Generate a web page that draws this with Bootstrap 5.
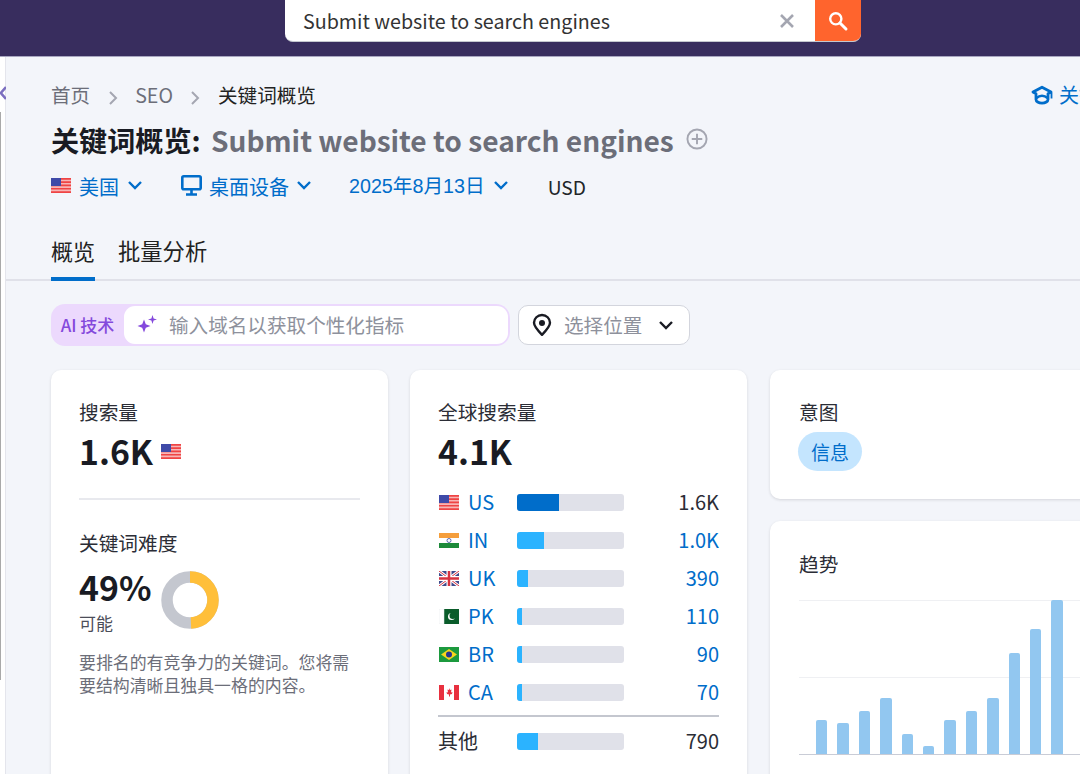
<!DOCTYPE html>
<html lang="zh">
<head>
<meta charset="utf-8">
<link rel="stylesheet" href="https://cdn.jsdelivr.net/npm/bootstrap@5.3.0/dist/css/bootstrap.min.css">
<style>
html,body{width:1080px;height:774px;overflow:hidden;margin:0}
body{background:#f3f5fa;font-family:"Noto Sans CJK SC","Noto Sans",sans-serif;color:#191b23;font-size:18px}
.topbar{height:57px;background:#382d5e;border-bottom:1px solid #a8a6c0;padding-left:285px}
.searchbox{width:576px;height:42px;background:#fff;border-radius:0 0 8px 8px;overflow:hidden;border-bottom:1px solid #c4c7cf}
.searchtext{padding-left:18px;font-size:19.7px;color:#333;line-height:42px;flex:1}
.searchclear{width:20px;margin-right:18px}
.searchbtn{width:46px;height:42px;background:#ff642d}
.stage{height:717px;overflow:hidden}
.siderail{width:6px;flex:none;background:#fff;border-right:1px solid #e4e5ec;position:relative}
.railline{position:absolute;left:0;top:55px;width:1px;height:568px;background:#a9a9a9}
.sidearrow{position:absolute;left:0;top:28px;display:block}
.mainpane{width:1074px;flex:none;overflow:hidden}
.pagehead{padding:23px 0 0 45px}
.crumbs{height:30px;font-size:19.6px;line-height:30px;color:#6c6e79;white-space:nowrap}
.crumbsep{width:45px;text-align:center}
.crumbsep2{width:45px;text-align:center}
.crumbnow{color:#222}
.learn{position:absolute;left:980px;top:0;color:#006dca;font-size:20px;line-height:30px;white-space:nowrap;gap:6px}
.crumbwrap{position:relative}
.pagetitle{font-size:28.1px;font-weight:700;line-height:40px;margin:10px 0 0;height:40px;white-space:nowrap}
.titlegray{color:#6c6e79;margin-left:4px}
.titleadd{margin-left:12px;vertical-align:2px}
.filters{height:36px;margin-top:9px;font-size:20px;color:#006dca;white-space:nowrap}
.filteritem{gap:8px}
.filterdevice{gap:7px;margin-left:38px}
.filterdate{margin-left:37px}
.filtercurrency{margin-left:39px;font-size:19.2px}
.filterarial{font-family:"Liberation Sans","Noto Sans CJK SC",sans-serif;font-size:19.7px}
.flagbox{width:20px;height:15px;flex:none;display:block}
.raised{margin-bottom:4px}
.tabsrow{height:56px;margin-top:20px;border-bottom:2px solid #e0e1e9;padding-left:45px;gap:23px}
.tabitem{font-size:22.3px;line-height:32px;padding-top:9px;height:56px;color:#222}
.tabitem.tabon{border-bottom:4px solid #006dca;font-size:22px}
.aibar{margin:23px 0 0 45px;gap:8px;height:42px}
.aigroup{width:459px;height:42px;background:#ecd9fd;border-radius:14px;padding:2px}
.ailabel{width:71px;text-align:center;font-size:17px;font-weight:500;color:#8449dc;padding-right:2px}
.aiinput{flex:1;background:#fff;border-radius:11px;height:38px;padding-left:12px;gap:11px;font-size:19.6px;color:#8e919c}
.placepick{width:172px;height:40px;background:#fff;border:1px solid #d3d5dd;border-radius:10px;padding:0 15px 0 13px;font-size:19.6px;color:#8e919c}
.picktext{margin-left:12px}
.cardrow{margin:24px 0 0 45px;gap:22px;align-items:flex-start}
.kwcard{background:#fff;border:0;border-radius:10px;box-shadow:0 1px 3px rgba(25,27,35,.14)}
.cardvol{width:337px;flex:none;height:420px;padding:28px 28px 0}
.cardglobal{width:337px;flex:none;height:420px;padding:28px 28px 0 28px}
.sidecol{width:400px;flex:none;gap:22px;margin-left:1px}
.cardintent{height:129px;padding:28px 29px 0}
.cardtrend{height:300px;padding:29px 29px 0}
.cardlabel{font-size:19.7px;line-height:28px;color:#2b2d36;height:28px}
.bigval{font-size:33.8px;font-weight:600;line-height:50px;height:50px;color:#191b23}
.cardrule{border-top:2px solid #e8e9ee;margin:22px 0 29px}
.kdblock{margin-top:7px}
.kdval{font-size:33.8px;font-weight:600;line-height:46px;height:46px}
.kdsub{font-size:17px;line-height:26px;color:#4c4e59}
.kdring{margin-left:10px}
.kddesc{font-size:16.9px;line-height:23px;color:#6c6e79;margin-top:14px;width:281px}
.georow{height:38px;font-size:20px;color:#006dca}
.georow.geofirst{margin-top:7px}
.geocode{width:58px;padding-left:9px;line-height:38px}
.geoflag{width:20px;flex:none;margin-left:1px}
.geotrack{width:107px;height:17px;background:#e0e1e9;border-radius:3px;overflow:hidden;flex:none}
.geofill{height:100%;background:#2bb3ff}
.geofill.geotop{background:#006dca}
.geonum{flex:1;text-align:right}
.geodark{color:#2b2d36}
.georule{border-top:2px solid #c4c7cf;margin-top:4px}
.georow.geoother{height:48px;color:#2b2d36}
.geoname{width:79px}
.intentpill{display:inline-block;width:64px;height:39px;line-height:39px;text-align:center;border-radius:20px;background:#c4e5fe;color:#006dca;font-size:19px;margin-left:-1px;margin-top:6px}
.trendplot{margin-top:22px;height:155px;width:372px;position:relative;border-bottom:1px solid #c9ccd6}
.gridline{position:absolute;left:0;right:0;height:1px;background:#eff0f3}
.barsrow{position:absolute;left:17px;bottom:0;gap:10px;align-items:flex-end;height:154px}
.trendbar{width:11.4px;background:#92c7f0;border-radius:2px 2px 0 0;flex:none}
</style>
</head>
<body>
<div class="topbar">
  <div class="searchbox d-flex align-items-center">
    <div class="searchtext">Submit website to search engines</div>
    <svg class="searchclear" viewBox="0 0 20 20" height="20" aria-hidden="true"><path d="M4 4l12 12M16 4L4 16" stroke="#a4a6b1" stroke-width="2.6" fill="none"/></svg>
    <div class="searchbtn d-flex align-items-center justify-content-center">
      <svg width="22" height="22" viewBox="0 0 22 22" aria-hidden="true"><circle cx="8.8" cy="8.8" r="5.6" fill="none" stroke="#fff" stroke-width="2.4"/><path d="M13 13l6 6" stroke="#fff" stroke-width="3" stroke-linecap="round"/></svg>
    </div>
  </div>
</div>
<div class="stage d-flex">
  <div class="siderail"><div class="railline"></div><svg class="sidearrow" width="6" height="16" viewBox="0 0 6 16" aria-hidden="true"><path d="M6 2L0.800 8l5.200 6" fill="none" stroke="#7c6fc0" stroke-width="2.600"/></svg></div>
  <div class="mainpane">
    <div class="pagehead">
      <div class="crumbwrap">
        <div class="crumbs d-flex align-items-center">
          <span>首页</span>
          <span class="crumbsep"><svg width="10" height="16" viewBox="0 0 10 16" aria-hidden="true"><path d="M2 2l6 6-6 6" fill="none" stroke="#a4a6b1" stroke-width="2"/></svg></span>
          <span>SEO</span>
          <span class="crumbsep2"><svg width="10" height="16" viewBox="0 0 10 16" aria-hidden="true"><path d="M2 2l6 6-6 6" fill="none" stroke="#a4a6b1" stroke-width="2"/></svg></span>
          <span class="crumbnow">关键词概览</span>
        </div>
        <div class="learn d-flex align-items-center">
          <svg width="22" height="20" viewBox="0 0 22 20" aria-hidden="true"><path d="M11 2.200L2 7l3 1.800v5.700c0 1.800 2.500 3.700 6 3.700s6-1.900 6-3.700V8.800L20 7z" fill="none" stroke="#006dca" stroke-width="2.800" stroke-linejoin="round"/><path d="M5.500 13c3.200-3 7.800-3 11 0" fill="none" stroke="#006dca" stroke-width="2.400"/><path d="M20.500 7.500v6" stroke="#006dca" stroke-width="1.800"/></svg>
          <span>关键词</span>
        </div>
      </div>
      <h1 class="pagetitle">关键词概览: <span class="titlegray">Submit website to search engines</span><svg class="titleadd" width="22" height="22" viewBox="0 0 23 23" aria-hidden="true"><circle cx="11.500" cy="11.500" r="10" fill="none" stroke="#a4a6b1" stroke-width="2"/><path d="M11.500 6v11M6 11.500h11" stroke="#a4a6b1" stroke-width="2"/></svg></h1>
      <div class="filters d-flex align-items-center">
        <div class="filteritem d-flex align-items-center">
          <svg class="flagbox raised" viewBox="0 0 20 15" aria-hidden="true"><rect width="20" height="15" fill="#f7b5b5"/><path d="M0 0h20v1.700H0zM0 3.300h20V5H0zM0 6.600h20v1.700H0zM0 9.900h20v1.700H0zM0 13.200h20V15H0z" fill="#ef4444"/><rect width="10" height="8" fill="#3f4aa8"/></svg>
          <span>美国</span>
          <svg class="raised" width="16" height="10" viewBox="0 0 16 10" aria-hidden="true"><path d="M2 2l6 6 6-6" fill="none" stroke="#006dca" stroke-width="2.400"/></svg>
        </div>
        <div class="filteritem filterdevice d-flex align-items-center">
          <svg class="raised" width="21" height="21" viewBox="0 0 21 21" aria-hidden="true"><rect x="1.300" y="1.300" width="18.400" height="13" rx="1.500" fill="none" stroke="#006dca" stroke-width="2.600"/><path d="M10.500 15v3.500M5 19.500h11" stroke="#006dca" stroke-width="2.600"/></svg>
          <span>桌面设备</span>
          <svg class="raised" width="16" height="10" viewBox="0 0 16 10" aria-hidden="true"><path d="M2 2l6 6 6-6" fill="none" stroke="#006dca" stroke-width="2.400"/></svg>
        </div>
        <div class="filteritem filterdate d-flex align-items-center">
          <span class="filterarial">2025年8月13日</span>
          <svg class="raised" width="16" height="10" viewBox="0 0 16 10" aria-hidden="true"><path d="M2 2l6 6 6-6" fill="none" stroke="#006dca" stroke-width="2.400"/></svg>
        </div>
        <span class="filtercurrency text-body">USD</span>
      </div>
    </div>
    <div class="tabsrow d-flex">
      <div class="tabitem tabon">概览</div>
      <div class="tabitem">批量分析</div>
    </div>
    <div class="aibar d-flex align-items-center">
      <div class="aigroup d-flex align-items-center">
        <span class="ailabel">AI 技术</span>
        <div class="aiinput d-flex align-items-center">
          <svg width="22" height="22" viewBox="0 0 22 22" aria-hidden="true"><path d="M8 5.500l1.800 4.700 4.700 1.800-4.700 1.800L8 18.500l-1.800-4.700L1.500 12l4.700-1.800zM16.500 1l1.100 3.400L21 5.500l-3.400 1.100L16.500 10l-1.100-3.400L12 5.500l3.400-1.100z" fill="#8449dc"/></svg>
          <span>输入域名以获取个性化指标</span>
        </div>
      </div>
      <div class="placepick d-flex align-items-center">
        <svg width="20" height="24" viewBox="0 0 20 24" aria-hidden="true"><path d="M10 2C5.600 2 2 5.400 2 9.800c0 3.300 2.600 6.500 8 12 5.400-5.500 8-8.700 8-12C18 5.400 14.400 2 10 2z" fill="none" stroke="#191b23" stroke-width="2.400" stroke-linejoin="round"/><circle cx="10" cy="10" r="3" fill="#191b23"/></svg>
        <span class="picktext flex-grow-1">选择位置</span>
        <svg width="16" height="10" viewBox="0 0 16 10" aria-hidden="true"><path d="M2 2l6 6 6-6" fill="none" stroke="#191b23" stroke-width="2.400"/></svg>
      </div>
    </div>
    <div class="cardrow d-flex">
      <div class="kwcard cardvol">
        <div class="cardlabel">搜索量</div>
        <div class="bigval d-flex align-items-center gap-2">1.6K
          <svg class="flagbox" viewBox="0 0 20 15" aria-hidden="true"><rect width="20" height="15" fill="#f7b5b5"/><path d="M0 0h20v1.700H0zM0 3.300h20V5H0zM0 6.600h20v1.700H0zM0 9.900h20v1.700H0zM0 13.200h20V15H0z" fill="#ef4444"/><rect width="10" height="8" fill="#3f4aa8"/></svg>
        </div>
        <div class="cardrule"></div>
        <div class="cardlabel">关键词难度</div>
        <div class="kdblock d-flex align-items-center">
          <div>
            <div class="kdval">49%</div>
            <div class="kdsub">可能</div>
          </div>
          <svg class="kdring" width="58" height="58" viewBox="0 0 58 58" aria-hidden="true"><circle cx="29" cy="29" r="23" fill="none" stroke="#c4c7cf" stroke-width="11.500"/><circle cx="29" cy="29" r="23" fill="none" stroke="#ffbf3a" stroke-width="11.500" stroke-dasharray="70.800 144.500" transform="rotate(-90 29 29)"/></svg>
        </div>
        <div class="kddesc">要排名的有竞争力的关键词。您将需要结构清晰且独具一格的内容。</div>
      </div>
      <div class="kwcard cardglobal">
        <div class="cardlabel">全球搜索量</div>
        <div class="bigval">4.1K</div>
        <div class="georow geofirst d-flex align-items-center">
          <svg class="geoflag flagbox" viewBox="0 0 20 15" aria-hidden="true"><rect width="20" height="15" fill="#f7b5b5"/><path d="M0 0h20v1.700H0zM0 3.300h20V5H0zM0 6.600h20v1.700H0zM0 9.900h20v1.700H0zM0 13.200h20V15H0z" fill="#ef4444"/><rect width="10" height="8" fill="#3f4aa8"/></svg>
          <span class="geocode">US</span>
          <div class="geotrack"><div class="geofill geotop" style="width:39%"></div></div>
          <span class="geonum geodark">1.6K</span>
        </div>
        <div class="georow d-flex align-items-center">
          <svg class="geoflag flagbox" viewBox="0 0 20 15" aria-hidden="true"><rect width="20" height="5" fill="#f59e3c"/><rect y="5" width="20" height="5" fill="#fff"/><rect y="10" width="20" height="5" fill="#1d8a3a"/><circle cx="10" cy="7.500" r="2" fill="none" stroke="#5b6bb5"/></svg>
          <span class="geocode">IN</span>
          <div class="geotrack"><div class="geofill" style="width:25%"></div></div>
          <span class="geonum">1.0K</span>
        </div>
        <div class="georow d-flex align-items-center">
          <svg class="geoflag flagbox" viewBox="0 0 20 15" aria-hidden="true"><rect width="20" height="15" fill="#3f4a8c"/><path d="M0 0l20 15M20 0L0 15" stroke="#fff" stroke-width="3"/><path d="M0 0l20 15M20 0L0 15" stroke="#d8323f" stroke-width="1"/><path d="M10 0v15M0 7.500h20" stroke="#fff" stroke-width="5"/><path d="M10 0v15M0 7.500h20" stroke="#d8323f" stroke-width="2.500"/></svg>
          <span class="geocode">UK</span>
          <div class="geotrack"><div class="geofill" style="width:10%"></div></div>
          <span class="geonum">390</span>
        </div>
        <div class="georow d-flex align-items-center">
          <svg class="geoflag flagbox" viewBox="0 0 20 15" aria-hidden="true"><rect width="20" height="15" fill="#0a5c2a"/><rect width="5" height="15" fill="#fff" stroke="#e4e5ea" stroke-width=".5"/><circle cx="12.500" cy="7.500" r="3.500" fill="#fff"/><circle cx="13.800" cy="6.700" r="3.300" fill="#0a5c2a"/></svg>
          <span class="geocode">PK</span>
          <div class="geotrack"><div class="geofill" style="width:5%"></div></div>
          <span class="geonum">110</span>
        </div>
        <div class="georow d-flex align-items-center">
          <svg class="geoflag flagbox" viewBox="0 0 20 15" aria-hidden="true"><rect width="20" height="15" fill="#1c9a3e"/><path d="M10 2l8 5.500-8 5.500-8-5.500z" fill="#f7d51d"/><circle cx="10" cy="7.500" r="3" fill="#27368f"/></svg>
          <span class="geocode">BR</span>
          <div class="geotrack"><div class="geofill" style="width:5%"></div></div>
          <span class="geonum">90</span>
        </div>
        <div class="georow d-flex align-items-center">
          <svg class="geoflag flagbox" viewBox="0 0 20 15" aria-hidden="true"><rect width="20" height="15" fill="#fff"/><rect width="5" height="15" fill="#e8303f"/><rect x="15" width="5" height="15" fill="#e8303f"/><path d="M10 3l1 2 1.500-.5-.5 3 1.500-.5-.5 2-2 .5v2h-1v-2l-2-.5-.5-2 1.500.5-.5-3 1.500.5z" fill="#e8303f"/></svg>
          <span class="geocode">CA</span>
          <div class="geotrack"><div class="geofill" style="width:5%"></div></div>
          <span class="geonum">70</span>
        </div>
        <div class="georule"></div>
        <div class="georow geoother d-flex align-items-center">
          <span class="geoname">其他</span>
          <div class="geotrack"><div class="geofill" style="width:20%"></div></div>
          <span class="geonum">790</span>
        </div>
      </div>
      <div class="sidecol d-flex flex-column">
        <div class="kwcard cardintent">
          <div class="cardlabel">意图</div>
          <span class="intentpill">信息</span>
        </div>
        <div class="kwcard cardtrend">
          <div class="cardlabel">趋势</div>
          <div class="trendplot">
            <div class="gridline" style="top:0"></div>
            <div class="gridline" style="top:77px"></div>
            <div class="barsrow d-flex">
              <div class="trendbar" style="height:34px"></div>
              <div class="trendbar" style="height:31px"></div>
              <div class="trendbar" style="height:43px"></div>
              <div class="trendbar" style="height:56px"></div>
              <div class="trendbar" style="height:20px"></div>
              <div class="trendbar" style="height:8px"></div>
              <div class="trendbar" style="height:34px"></div>
              <div class="trendbar" style="height:43px"></div>
              <div class="trendbar" style="height:56px"></div>
              <div class="trendbar" style="height:101px"></div>
              <div class="trendbar" style="height:125px"></div>
              <div class="trendbar" style="height:154px"></div>
            </div>
          </div>
        </div>
      </div>
    </div>
  </div>
</div>
</body>
</html>
